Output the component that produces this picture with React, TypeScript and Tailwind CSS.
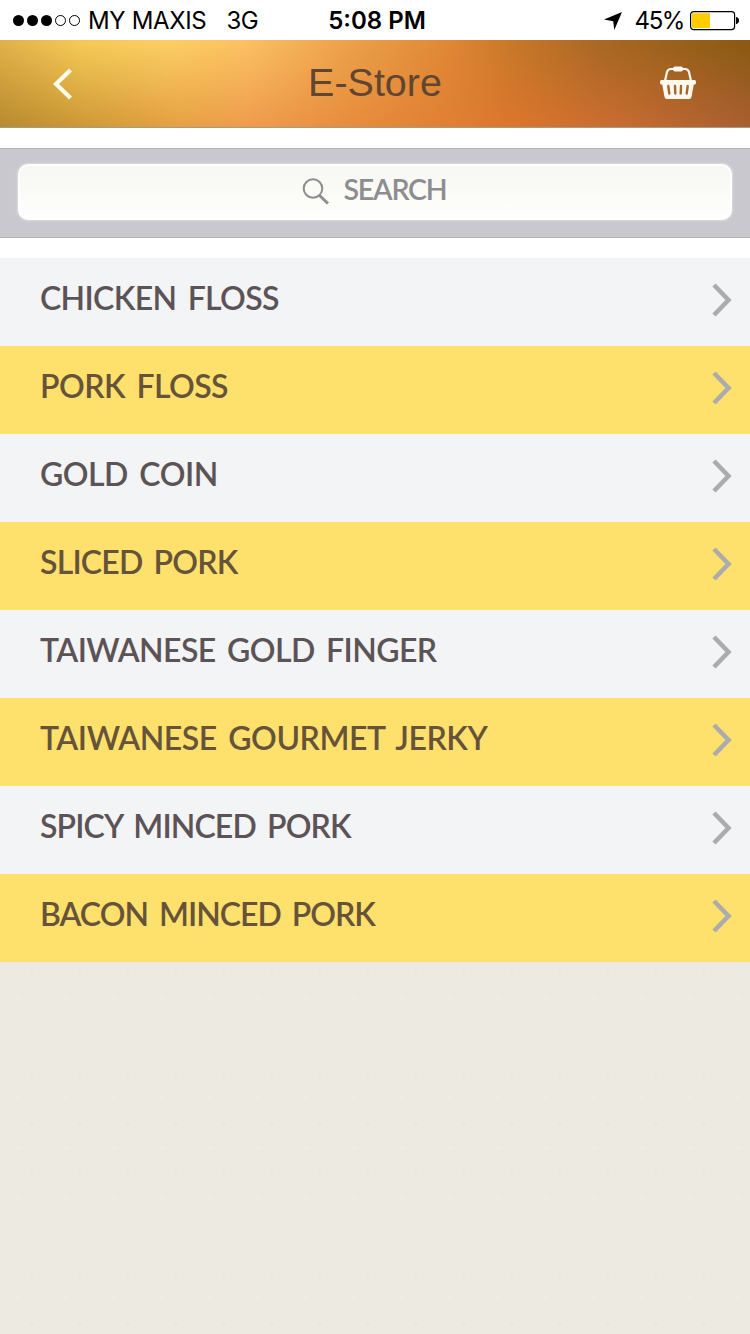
import clsx from "clsx";

const categories = [
  { name: "CHICKEN FLOSS", tracking: "tracking-[-0.65px]" },
  { name: "PORK FLOSS", tracking: "tracking-[-0.55px]" },
  { name: "GOLD COIN", tracking: "tracking-[-0.5px]" },
  { name: "SLICED PORK", tracking: "tracking-[-0.8px]" },
  { name: "TAIWANESE GOLD FINGER", tracking: "tracking-[-0.57px]" },
  { name: "TAIWANESE GOURMET JERKY", tracking: "tracking-[-0.45px]" },
  { name: "SPICY MINCED PORK", tracking: "tracking-[-0.87px]" },
  { name: "BACON MINCED PORK", tracking: "tracking-[-1px]" },
];

function StatusBar() {
  return (
    <div className="grid h-10 grid-cols-[1fr_auto_1fr] items-center bg-white pt-px font-['Inter',sans-serif] text-[24px] leading-none text-black">
      <div className="flex items-center pl-[13px]">
        <div className="flex gap-[3px]">
          <span className="size-[11px] rounded-full bg-black" />
          <span className="size-[11px] rounded-full bg-black" />
          <span className="size-[11px] rounded-full bg-black" />
          <span className="size-[11px] rounded-full border border-black" />
          <span className="size-[11px] rounded-full border border-black" />
        </div>
        <span className="ml-2 tracking-[-0.35px]">MY MAXIS</span>
        <span className="ml-5 tracking-[-0.5px]">3G</span>
      </div>
      <span className="pl-1 font-semibold">5:08 PM</span>
      <div className="flex items-center justify-end pr-[11px]">
        <svg className="mr-[13px] h-[18px] w-[18px]" viewBox="0 0 18 18">
          <path d="M18 0L10.3 18L9.2 9.2L0 7.6Z" fill="#000" />
        </svg>
        <span className="tracking-[-1.4px]">45%</span>
        <svg className="ml-[6px] h-[20px] w-[49px]" viewBox="0 0 49 20">
          <rect x="0.6" y="0.6" width="44" height="18" rx="3" fill="none" stroke="#000" strokeWidth="1.2" />
          <rect x="2" y="2.2" width="18" height="14.8" rx="1" fill="#fc0" />
          <path d="M46 6C48.3 6.5 49 7.8 49 9.6S48.3 12.7 46 13.2Z" fill="#000" />
        </svg>
      </div>
    </div>
  );
}

function Header() {
  return (
    <header className="grid h-[88px] bg-[linear-gradient(90deg,#e0b048_0,#f3c955_80px,#fccd62_170px,#fbbf62_250px,#eda34c_340px,#df8735_450px,#c97929_510px,#aa6824_600px,#8a5a14_750px)]">
      <div className="col-start-1 row-start-1 bg-[linear-gradient(90deg,#b68a2f_0,#cf9836_90px,#e5a044_180px,#ee9b4c_250px,#e68c3c_350px,#e07f32_450px,#da752c_520px,#c86c31_620px,#a95f31_750px)] [mask-image:linear-gradient(180deg,transparent_5%,black_100%)]" />
      <div className="z-10 col-start-1 row-start-1 grid grid-cols-3 items-center border-b border-[#a89a88]">
        <svg className="ml-[52px] h-8 w-[22px]" viewBox="0 0 22 32">
          <path d="M18.5 2L4 16L18.5 30" fill="none" stroke="#fffbed" strokeWidth="4.2" />
        </svg>
        <h1 className="pb-[2px] text-center font-['Liberation_Sans',sans-serif] text-[39.5px] leading-none text-[#604530]">
          E-Store
        </h1>
        <svg className="mr-[54px] mb-[3px] h-9 w-9 justify-self-end" viewBox="0 0 36 36">
          <path d="M5 17L7 8Q8 5 11 5H25Q28 5 29 8L31 17" fill="none" stroke="#fff9f0" strokeWidth="2.2" />
          <rect x="13" y="2.5" width="10" height="5" rx="2" fill="#fff9f0" />
          <rect x="0" y="16" width="36" height="4.5" rx="1.5" fill="#fff9f0" />
          <path d="M2 19H34L31.5 33Q31 35 29 35H7Q5 35 4.500 33Z" fill="#fff9f0" />
          <path
            d="M8.3 22L9.3 29.5M15 22L15.3 29.5M21 22L20.7 29.5M27.7 22L26.7 29.5"
            stroke="#a8652d"
            strokeWidth="2.4"
            strokeLinecap="round"
          />
        </svg>
      </div>
    </header>
  );
}

function SearchBar() {
  return (
    <div className="bg-white py-5">
      <div className="h-[90px] border-y border-[#b2b1b5] bg-[#c9c8cf] px-[18px] py-[15px]">
        <div className="flex h-14 items-center justify-center rounded-[10px] border-2 border-white bg-linear-to-b from-[#f7f8f3] to-[#fefefc] pr-0.5 shadow-[0_0_2px_1px_#dcdcdf]">
          <svg className="mr-3.5 h-7 w-7" viewBox="0 0 28 28">
            <circle cx="11" cy="10.5" r="9.3" fill="none" stroke="#8d8d90" strokeWidth="2" />
            <path d="M17.5 17.5L26 25.5" stroke="#8d8d90" strokeWidth="3" />
          </svg>
          <span className="pb-[6px] font-['Lato',sans-serif] text-[28.5px] leading-none font-semibold tracking-[-1.2px] text-[#8d8d90]">
            SEARCH
          </span>
        </div>
      </div>
    </div>
  );
}

export default function App() {
  return (
    <div className="flex min-h-[1334px] w-[750px] flex-col bg-[#edeae2]">
      <StatusBar />
      <Header />
      <SearchBar />
      <ul>
        {categories.map((category, i) => (
          <li
            key={category.name}
            className={clsx(
              "flex h-[88px] items-center justify-between pr-[18px] pl-10",
              i % 2 === 0 ? "bg-[#f3f4f6] text-[#5b5355]" : "bg-[#fee16c] text-[#66533a]",
            )}
          >
            <span
              className={clsx(
                "pb-2 font-['Lato',sans-serif] text-[32px] leading-8 font-semibold [word-spacing:4px] whitespace-nowrap",
                category.tracking,
              )}
            >
              {category.name}
            </span>
            <svg className="mt-[-4px] h-[34px] w-5" viewBox="0 0 20 34">
              <path d="M2 2L16.5 17L2 32" fill="none" stroke="#adacac" strokeWidth="4.6" />
            </svg>
          </li>
        ))}
      </ul>
      <div className="grow bg-[radial-gradient(circle_at_32px_12px,#e6e3db_1px,transparent_1.5px),radial-gradient(circle_at_18px_36px,#f0ede6_1px,transparent_2px)] bg-size-[48px_50px]" />
    </div>
  );
}
